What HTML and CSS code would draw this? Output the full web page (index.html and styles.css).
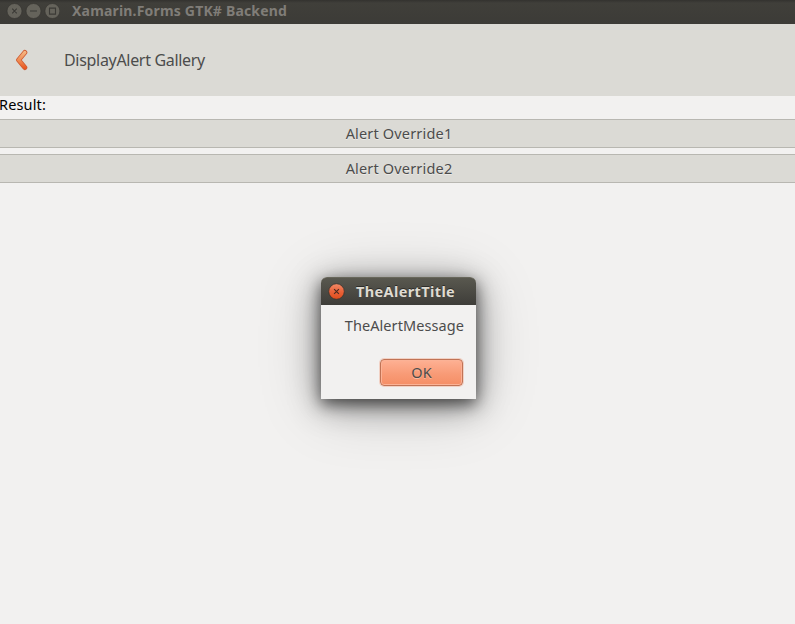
FILE: index.html
```html
<!DOCTYPE html>
<html lang="en">
<head>
<meta charset="utf-8">
<title>Xamarin.Forms GTK# Backend</title>
<link rel="stylesheet" href="styles.css">
</head>
<body>
<div class="window">
  <header class="titlebar">
    <svg class="controls" width="54" height="16" viewBox="0 0 54 16" fill="none">
      <g fill="#65635b" stroke="#34332f" stroke-width=".6">
        <circle cx="8.5" cy="8" r="7.5"/><circle cx="27.5" cy="8" r="7.5"/><circle cx="46.4" cy="8" r="7.5"/>
      </g>
      <path d="M6.2 5.7l4.6 4.6M10.8 5.7l-4.6 4.6M24 8h7M43.5 5.1h6v6h-6z" stroke="#3b3a36" stroke-width="1.1"/>
    </svg>
    <span class="window-title">Xamarin.Forms GTK# Backend</span>
  </header>
  <nav class="navbar">
    <svg class="back" width="14" height="22" viewBox="0 0 14 22" fill="none" stroke-linecap="round" stroke-linejoin="round">
      <defs>
        <linearGradient id="arrow" x1="0" y1="0" x2="0" y2="22" gradientUnits="userSpaceOnUse"><stop offset=".1" stop-color="#f4b985"/><stop offset=".55" stop-color="#ef8850"/><stop offset=".9" stop-color="#e9531c"/></linearGradient>
      </defs>
      <path d="M9.8 3.5L3.6 11l6.2 7.5" stroke="#cf5b32" stroke-width="5"/>
      <path d="M9.8 3.5L3.6 11l6.2 7.5" stroke="url(#arrow)" stroke-width="3.4"/>
    </svg>
    <span class="page-title">DisplayAlert Gallery</span>
  </nav>
  <main>
    <div class="result">Result:</div>
    <div class="buttons">
      <button class="wide">Alert Override1</button>
      <button class="wide">Alert Override2</button>
    </div>
  </main>
  <section class="dialog">
    <header class="dialog-bar">
      <svg class="close" width="17" height="17" viewBox="0 0 17 17">
        <defs><linearGradient id="red" x1="0" y1="0" x2="0" y2="1"><stop stop-color="#f48b68"/><stop offset=".5" stop-color="#e9633a"/><stop offset="1" stop-color="#df4c1b"/></linearGradient></defs>
        <circle cx="8.5" cy="8.5" r="7.8" fill="url(#red)" stroke="#39342e" stroke-width=".8"/>
        <path d="M6.1 6.1l4.8 4.8M10.9 6.1l-4.8 4.8" stroke="#4b2a20" stroke-width="1.1"/>
      </svg>
      <span class="dialog-title">TheAlertTitle</span>
    </header>
    <div class="dialog-body">
      <p class="message">TheAlertMessage</p>
      <button class="ok">OK</button>
    </div>
  </section>
</div>
</body>
</html>
```
FILE: styles.css
```css
* { box-sizing: border-box; }
body {
  margin: 0;
  font-family: "Noto Sans", sans-serif;
  font-size: 14px;
  color: #4c4c4c;
}
button { font: inherit; color: inherit; margin: 0; padding: 0; }
.window {
  position: relative;
  height: 624px;
  overflow: hidden;
  background: #f2f1f0;
}
.titlebar {
  display: flex;
  align-items: center;
  height: 24px;
  padding: 0 6px 2px;
  background: linear-gradient(#33322f, #403f3a 3px, #3c3b37);
}
.controls { flex: none; margin-top: -1px; }
.window-title {
  margin-left: 12px;
  font-weight: 700;
  line-height: 20px;
  letter-spacing: .18px;
  color: #807d78;
  white-space: nowrap;
}
.navbar {
  display: flex;
  align-items: center;
  height: 72px;
  padding-left: 15px;
  background: #dbdad5;
}
.page-title { margin-left: 35px; font-size: 16px; white-space: nowrap; letter-spacing: -.31px; }
.result { height: 23px; margin-left: -1px; line-height: 16px; color: #000; font-size: 14.5px; letter-spacing: .15px; }
.buttons { display: flex; flex-direction: column; gap: 6px; }
.wide {
  height: 29px;
  padding: 0 0 2px 3px;
  border: solid #b8b7b1;
  border-width: 1px 0;
  background: #dbdad5;
  font-size: 14.5px;
  letter-spacing: .17px;
  text-shadow: 0 1px #ebeae7;
}
.dialog {
  position: absolute;
  left: 321px;
  top: 277px;
  width: 155px;
  height: 122px;
  border-radius: 6px 6px 0 0;
  background: #f2f1f0;
  box-shadow: 0 5px 15px rgba(0, 0, 0, .55), 0 6px 32px rgba(0, 0, 0, .42), 0 8px 65px rgba(0, 0, 0, .2);
}
.dialog-bar {
  display: flex;
  align-items: center;
  height: 28px;
  padding-left: 7px;
  border-top: 1px solid #68675b;
  border-radius: 6px 6px 0 0;
  background: linear-gradient(#59584f, #3e3d39);
}
.dialog-title {
  margin: -2px 0 0 11px;
  font-weight: 700;
  font-size: 14.5px;
  letter-spacing: .38px;
  color: #dfdbd2;
  text-shadow: 0 -1px #2d2c29;
  white-space: nowrap;
}
.dialog-body {
  display: flex;
  flex-direction: column;
  align-items: flex-end;
  padding: 10px 12px 0 0;
}
.message { margin: 0 0 24px; font-size: 14.5px; line-height: 20px; letter-spacing: .08px; white-space: nowrap; }
.ok {
  width: 83px;
  height: 27px;
  margin-right: 1px;
  padding-bottom: 1px;
  border: 1px solid #c17355;
  border-radius: 4px;
  background: linear-gradient(#feb194, #f89b77 55%, #f58e65);
  box-shadow: inset 0 0 0 1px #fbb296, 0 0 0 1px rgba(240, 150, 115, .35);
  font-size: 14.5px;
  text-shadow: 0 1px #fbb99f;
}
```
